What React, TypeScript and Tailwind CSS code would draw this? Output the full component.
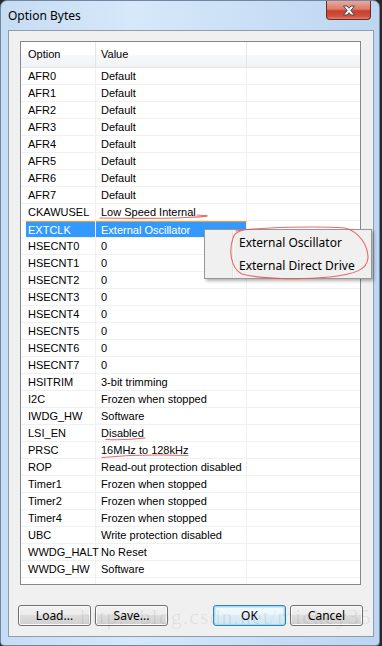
import React from 'react';

type Row = { option: string; value: string };

const rows: Row[] = [
  { option: 'AFR0', value: 'Default' },
  { option: 'AFR1', value: 'Default' },
  { option: 'AFR2', value: 'Default' },
  { option: 'AFR3', value: 'Default' },
  { option: 'AFR4', value: 'Default' },
  { option: 'AFR5', value: 'Default' },
  { option: 'AFR6', value: 'Default' },
  { option: 'AFR7', value: 'Default' },
  { option: 'CKAWUSEL', value: 'Low Speed Internal' },
  { option: 'EXTCLK', value: 'External Oscillator' },
  { option: 'HSECNT0', value: '0' },
  { option: 'HSECNT1', value: '0' },
  { option: 'HSECNT2', value: '0' },
  { option: 'HSECNT3', value: '0' },
  { option: 'HSECNT4', value: '0' },
  { option: 'HSECNT5', value: '0' },
  { option: 'HSECNT6', value: '0' },
  { option: 'HSECNT7', value: '0' },
  { option: 'HSITRIM', value: '3-bit trimming' },
  { option: 'I2C', value: 'Frozen when stopped' },
  { option: 'IWDG_HW', value: 'Software' },
  { option: 'LSI_EN', value: 'Disabled' },
  { option: 'PRSC', value: '16MHz to 128kHz' },
  { option: 'ROP', value: 'Read-out protection disabled' },
  { option: 'Timer1', value: 'Frozen when stopped' },
  { option: 'Timer2', value: 'Frozen when stopped' },
  { option: 'Timer4', value: 'Frozen when stopped' },
  { option: 'UBC', value: 'Write protection disabled' },
  { option: 'WWDG_HALT', value: 'No Reset' },
  { option: 'WWDG_HW', value: 'Software' },
];

const SELECTED = 'EXTCLK';

const listFont = { fontFamily: '"Liberation Sans", Arial, sans-serif' };
const uiFont = { fontFamily: '"Noto Sans", "Liberation Sans", sans-serif' };

const WinButton: React.FC<{ label: string; isDefault?: boolean; className?: string }> = ({
  label,
  isDefault = false,
  className = '',
}) => (
  <div
    className={`w-[73px] h-[21px] rounded-[3px] border flex items-center justify-center text-[12px] text-black ${
      isDefault
        ? 'border-[#3c7fb1] bg-[linear-gradient(to_bottom,#f4fafd_0%,#eaf5fb_50%,#dcedf7_50%,#d0e6f3_100%)] shadow-[inset_0_0_0_1px_#9fdcf7,inset_0_0_0_2px_#c9ecfb]'
        : 'border-[#707070] bg-[linear-gradient(to_bottom,#f2f2f2_0%,#ebebeb_50%,#dddddd_50%,#cfcfcf_100%)] shadow-[inset_0_0_0_1px_#fcfcfc]'
    } ${className}`}
    style={uiFont}
  >
    {label}
  </div>
);

const CloseButton: React.FC = () => (
  <div className="w-[45px] h-[19px] mr-[8px] self-start rounded-b-[4px] border border-t-0 border-[#6e2a22] bg-[linear-gradient(to_bottom,#e9a99c_0%,#dc7b6b_45%,#c8402c_55%,#d0523f_85%,#e0806f_100%)] flex items-center justify-center">
    <svg width="14" height="11" viewBox="0 0 14 11">
      <path
        d="M1.5 1 H5 L7 3.3 L9 1 H12.5 L8.8 5.5 L12.5 10 H9 L7 7.7 L5 10 H1.5 L5.2 5.5 Z"
        fill="#ffffff"
        stroke="#4a4a4a"
        strokeWidth="1"
        strokeLinejoin="round"
      />
    </svg>
  </div>
);

const ListRow: React.FC<{ row: Row }> = ({ row }) => {
  const selected = row.option === SELECTED;
  return (
    <div className="flex h-[17px] border-b border-[#f0f0f0] text-[11px] leading-[16px]">
      <div className="w-[75px] shrink-0 border-r border-[#f0f0f0] flex">
        <div
          className={`ml-[5px] flex-1 pl-[2px] ${
            selected ? 'bg-[#3399ff] text-white border-t border-[#f0a030]' : 'text-black'
          }`}
        >
          {row.option}
        </div>
      </div>
      <div
        className={`w-[151px] shrink-0 border-r border-[#f0f0f0] pl-[5px] ${
          selected ? 'bg-[#3399ff] text-white border-t border-t-[#f0a030]' : 'text-black'
        }`}
      >
        {row.value}
      </div>
      <div className="flex-1" />
    </div>
  );
};

const App: React.FC = () => {
  return (
    <div className="relative w-[382px] h-[646px] overflow-hidden bg-[#2a2a2a]">
      <div className="w-[380px] h-[646px] flex flex-col rounded-t-[7px] rounded-b-[4px] border border-[#6f87a3] bg-[linear-gradient(to_right,#c6dcf3_0%,#d6e8fa_35%,#c9def5_70%,#bdd6f1_100%)]">
        {/* title bar */}
        <div className="h-[29px] flex items-start shrink-0">
          <div className="pl-[7px] pt-[6px] text-[12px] text-black leading-[17px]" style={uiFont}>
            Option Bytes
          </div>
          <div className="ml-auto" />
          <CloseButton />
        </div>

        {/* client area */}
        <div className="ml-[7px] w-[366px] h-[607px] shrink-0 border border-[#8b9db3] bg-[#f0f0f0] flex flex-col">
          {/* list view */}
          <div
            className="ml-[11px] mt-[10px] w-[341px] h-[544px] border border-[#828790] bg-white flex flex-col"
            style={listFont}
          >
            <div className="flex h-[26px] shrink-0 border-b border-[#e5e5e5] bg-[linear-gradient(to_bottom,#ffffff_0%,#ffffff_50%,#f7f8fa_51%,#f1f2f4_100%)] text-[11px] text-black">
              <div className="w-[75px] shrink-0 border-r border-[#e5e5e5] pl-[7px] flex items-center">Option</div>
              <div className="w-[151px] shrink-0 border-r border-[#e5e5e5] pl-[5px] flex items-center">Value</div>
              <div className="flex-1" />
            </div>
            {rows.map((r) => (
              <ListRow key={r.option} row={r} />
            ))}
            <div className="flex flex-1">
              <div className="w-[75px] shrink-0 border-r border-[#f0f0f0]" />
              <div className="w-[151px] shrink-0 border-r border-[#f0f0f0]" />
              <div className="flex-1" />
            </div>
          </div>

          {/* buttons */}
          <div className="flex mt-[20px] ml-[9px]">
            <WinButton label="Load..." />
            <WinButton label="Save..." className="ml-[4px]" />
            <WinButton label="OK" isDefault className="ml-[45px]" />
            <WinButton label="Cancel" className="ml-[4px]" />
          </div>
        </div>
      </div>

      {/* dropdown menu of the selected row */}
      <div
        className="absolute left-[204px] top-[229px] w-[168px] h-[50px] border border-[#979797] bg-[#f0f0f0] shadow-[2px_2px_3px_rgba(0,0,0,0.3)] flex"
        style={uiFont}
      >
        <div className="w-[28px] shrink-0 border-r border-[#e2e3e3]" />
        <div className="w-px bg-white shrink-0" />
        <div className="flex-1 flex flex-col pt-[1px] pl-[5px] text-[12px] text-black">
          <div className="h-[23px] flex items-center">External Oscillator</div>
          <div className="h-[23px] flex items-center">External Direct Drive</div>
        </div>
      </div>

      {/* watermark */}
      <div
        className="absolute left-[80px] top-[600px] text-[22px] tracking-[1px] text-black/[0.07] whitespace-nowrap pointer-events-none"
        style={{ fontFamily: '"Liberation Serif", "Times New Roman", serif' }}
      >
        http://blog.csdn.net/mickey35
      </div>

      {/* red hand-drawn annotations */}
      <svg className="absolute inset-0 pointer-events-none" width="382" height="646" viewBox="0 0 382 646">
        <g fill="none" stroke="#e8514f" strokeWidth="1.1" strokeLinecap="round" opacity="0.85">
          <path d="M100 218 Q150 219 186 217.5 T197 215" />
          <path d="M106 439.5 Q125 440.5 145 438" />
          <path d="M102 457.5 Q140 454 188 455.5" />
          <path d="M236 231 C260 227 320 226 345 228 C360 232 368 246 368 258 C367 270 355 274 330 277 C300 280 260 279 242 274 C230 268 229 250 233 238 C234 234 238 231 244 230" />
        </g>
      </svg>
    </div>
  );
};

export default App;
